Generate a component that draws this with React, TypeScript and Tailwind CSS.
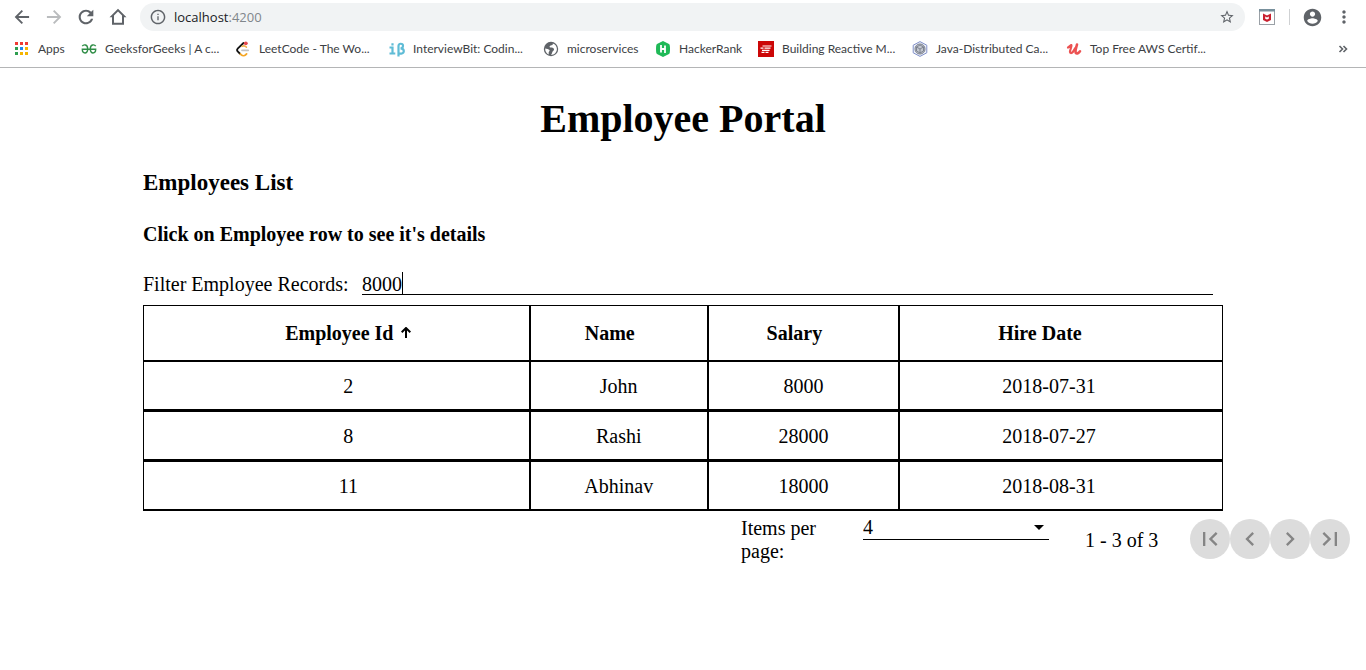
import React, { useState } from "react";

const employees = [
  { id: 2, name: "John", salary: 8000, hired: "2018-07-31" },
  { id: 8, name: "Rashi", salary: 28000, hired: "2018-07-27" },
  { id: 11, name: "Abhinav", salary: 18000, hired: "2018-08-31" },
];

function Icon({ d, className }: { d: string; className?: string }) {
  return (
    <svg viewBox="0 0 24 24" fill="currentColor" aria-hidden="true" className={className}>
      <path d={d} />
    </svg>
  );
}

const paths = {
  back: "M20.500 10.800H7.600L13.200 5.200L11.600 3.600L3.200 12L11.600 20.400L13.200 18.800L7.600 13.200H20.500Z",
  forward: "M3.500 10.800H16.400L10.800 5.200L12.400 3.600L20.800 12L12.400 20.400L10.800 18.800L16.400 13.200H3.500Z",
  reload:
    "M18.200 5.800C16.600 4.200 14.400 3.200 12 3.200C7.100 3.200 3.200 7.100 3.200 12C3.200 16.900 7.100 20.800 12 20.800C16.100 20.800 19.500 18 20.500 14.200H17.900C17 16.600 14.700 18.300 12 18.300C8.500 18.300 5.700 15.500 5.700 12C5.700 8.500 8.500 5.700 12 5.700C13.700 5.700 15.300 6.400 16.400 7.600L13 11H20.800V3.200Z",
  home: "M12 2.200L1.800 12.400H4.800V21.200H19.200V12.400H22.200L12 2.200zM12 5.500L16.800 10.200V18.900H7.200V10.200L12 5.500z",
  info: "M11 7h2v2h-2zm0 4h2v6h-2zm1-10C5.900 1 1 5.900 1 12s4.900 11 11 11 11-4.900 11-11S18.100 1 12 1zm0 19.800c-4.850 0-8.800-3.950-8.800-8.800s3.950-8.800 8.800-8.800 8.800 3.950 8.800 8.800-3.950 8.800-8.800 8.800z",
  star: "M22 9.240l-7.190-.620L12 2 9.190 8.630 2 9.240l5.460 4.730L5.820 21 12 17.270 18.180 21l-1.630-7.030L22 9.240zM12 15.400l-3.760 2.270 1-4.280-3.320-2.880 4.380-.380L12 6.100l1.710 4.040 4.380.380-3.320 2.880 1 4.280L12 15.400z",
  person:
    "M12 2C6.480 2 2 6.480 2 12s4.480 10 10 10 10-4.480 10-10S17.520 2 12 2zm0 3c1.660 0 3 1.340 3 3s-1.340 3-3 3-3-1.340-3-3 1.340-3 3-3zm0 14.200c-2.500 0-4.710-1.280-6-3.220.030-1.990 4-3.080 6-3.080 1.990 0 5.970 1.090 6 3.080-1.290 1.940-3.500 3.220-6 3.220z",
  more: "M12 8c1.100 0 2-.900 2-2s-.900-2-2-2-2 .900-2 2 .900 2 2 2zm0 2c-1.100 0-2 .900-2 2s.900 2 2 2 2-.900 2-2-.900-2-2-2zm0 6c-1.100 0-2 .900-2 2s.900 2 2 2 2-.900 2-2-.900-2-2-2z",
  first: "M18.410 16.590L13.820 12l4.590-4.590L17 6l-6 6 6 6zM6 6h2v12H6z",
  prev: "M15.410 7.410L14 6l-6 6 6 6 1.410-1.410L10.830 12z",
  next: "M10 6L8.590 7.410 13.170 12l-4.580 4.590L10 18l6-6z",
  last: "M5.590 7.410L10.180 12l-4.590 4.590L7 18l6-6-6-6zM16 6h2v12h-2z",
};

function AppsIcon() {
  const colors = [
    "#f03a33", "#f03a33", "#f03a33",
    "#2e9e50", "#1e88f0", "#f5b400",
    "#2e9e50", "#f5b400", "#f5b400",
  ];
  return (
    <svg viewBox="0 0 16 16" className="size-4 shrink-0" aria-hidden="true">
      {colors.map((c, i) => (
        <rect key={i} x={1 + (i % 3) * 5} y={1 + Math.floor(i / 3) * 5} width="3" height="3" fill={c} />
      ))}
    </svg>
  );
}

function GeeksIcon() {
  return (
    <svg viewBox="0 0 16 16" className="size-4 shrink-0" fill="none" stroke="#2f8d46" strokeWidth="1.400" aria-hidden="true">
      <path d="M1.300 5.200C2.500 3.300 6.700 3 6.700 8C6.700 13.400 1.300 13 1.300 8.300H14.700C14.700 13 9.300 13.400 9.300 8C9.300 3 13.500 3.300 14.700 5.200" />
    </svg>
  );
}

function LeetIcon() {
  return (
    <svg viewBox="0 0 16 16" className="size-4 shrink-0" fill="none" strokeLinecap="round" aria-hidden="true">
      <path d="M8.500 2L2.900 7.300C1.900 8.300 1.900 9.600 2.900 10.600L4.800 12.500" stroke="#111" strokeWidth="1.800" />
      <path d="M5.400 13L6.300 13.800C7.500 15 9.500 15 10.600 13.900L11.600 12.900" stroke="#f5a623" strokeWidth="1.800" />
      <path d="M7 5.400C8.200 4.700 9.600 4.700 10.600 5.500L11.400 6.200" stroke="#f0b04a" strokeWidth="1.600" />
      <path d="M7 9.300H13.200" stroke="#c2c2c2" strokeWidth="1.800" />
      <circle cx="10.800" cy="2.300" r="1.900" fill="#e5484d" />
    </svg>
  );
}

function InterviewIcon() {
  return (
    <svg viewBox="0 0 16 16" className="size-4 shrink-0" fill="none" stroke="#5fbcd6" strokeWidth="2.200" aria-hidden="true">
      <path d="M0.500 6.500H3.500V12.500M0.500 12.500H6.300M3.500 2.200V4.400" />
      <path d="M9.500 15.500V5C9.500 2 14 2.100 14 4.700C14 6.500 13 7.300 11.500 7.300C13.500 7.300 14.800 8.300 14.800 10C14.800 12.800 11.300 13.300 9.500 11.800" />
    </svg>
  );
}

function GlobeIcon() {
  return (
    <svg viewBox="0 0 16 16" className="size-4 shrink-0" aria-hidden="true">
      <circle cx="8" cy="8" r="7.200" fill="#5f6368" />
      <path d="M9.800 2.500C10.200 3.800 9 4.400 7.600 4.500C6.300 4.700 6.300 6.400 7.400 6.600C9 6.700 10.700 6.800 11 8.300C11.200 9.300 10.200 9.800 9.600 10.500C9 11.300 9.200 12.500 8 14C11.300 14 13.900 11.400 13.900 8.100C13.900 5.500 12.200 3.300 9.800 2.500Z" fill="#fff" />
      <path d="M2.200 7.400C3.600 7.900 5.900 8 6.500 9C7 10 5.900 10.400 5.700 11.300C5.600 12 5.900 12.900 5.600 13.400C3.400 12.400 2 10 2.200 7.400Z" fill="#fff" />
    </svg>
  );
}

function HackerIcon() {
  return (
    <svg viewBox="0 0 16 16" className="size-4 shrink-0" aria-hidden="true">
      <path d="M8 0L14 3Q15 3.600 15 8Q15 12.400 14 13L8 16L2 13Q1 12.400 1 8Q1 3.600 2 3Z" fill="#1fb957" />
      <path d="M6 4V11.500M10 4.500V12M6 8H10" stroke="#fff" strokeWidth="1.800" />
    </svg>
  );
}

function ReactiveIcon() {
  return (
    <svg viewBox="0 0 16 16" className="size-4 shrink-0" aria-hidden="true">
      <rect width="16" height="16" fill="#cc0707" />
      <path d="M4.500 5H13.500M2.500 7.200H5.500M6.500 7.200H12.500M4 9.300H11.500M3.500 11.300H6.500M7.500 11.300H10.500" stroke="#fff" strokeWidth="1.200" />
    </svg>
  );
}

function JavaIcon() {
  return (
    <svg viewBox="0 0 16 16" className="size-4 shrink-0" fill="none" aria-hidden="true">
      <path d="M8 0.600L14.800 4.200V11.800L8 15.400L1.200 11.800V4.200Z" stroke="#8291c8" fill="#eceff8" />
      <circle cx="8" cy="8" r="5" stroke="#7a808c" fill="#c3c7cf" />
      <path d="M4.500 6L8 4L11.500 6V10L8 12L4.500 10ZM4.500 6L8 8L11.500 6M8 8V12" stroke="#777d8b" strokeWidth="0.900" />
    </svg>
  );
}

function UdemyIcon() {
  return (
    <svg viewBox="0 0 16 16" className="size-4 shrink-0" fill="none" stroke="#ec5252" strokeLinecap="round" strokeLinejoin="round" aria-hidden="true">
      <path d="M2 6.500C3.200 5.900 4.300 4.500 5.300 4C6.300 4.500 3.800 9 4 11C4.500 13.600 7.500 11 9 7.500" strokeWidth="2.200" />
      <path d="M11 3.500C10.300 6.500 8.800 10 9.800 12C10.800 13.200 12.700 12 14 10.300" strokeWidth="2.600" />
    </svg>
  );
}

const bookmarks = [
  { label: "Apps", icon: <AppsIcon />, width: "w-[67px]" },
  { label: "GeeksforGeeks | A c...", icon: <GeeksIcon />, width: "w-[154px]" },
  { label: "LeetCode - The Wo...", icon: <LeetIcon />, width: "w-[154px]" },
  { label: "InterviewBit: Codin...", icon: <InterviewIcon />, width: "w-[154px]" },
  { label: "microservices", icon: <GlobeIcon />, width: "w-[112px]" },
  { label: "HackerRank", icon: <HackerIcon />, width: "w-[103px]" },
  { label: "Building Reactive M...", icon: <ReactiveIcon />, width: "w-[154px]" },
  { label: "Java-Distributed Ca...", icon: <JavaIcon />, width: "w-[154px]" },
  { label: "Top Free AWS Certif...", icon: <UdemyIcon />, width: "w-[154px]" },
];

function BrowserBar() {
  return (
    <header className="border-b border-[#b4b5b6] bg-white font-['Open_Sans',sans-serif] text-[#5f6368]">
      <div className="flex h-[34px] items-center pr-3 pl-3">
        <div className="flex items-center gap-3">
          <button aria-label="Back" className="size-5"><Icon d={paths.back} className="size-5" /></button>
          <button aria-label="Forward" className="size-5 text-[#babcbe]"><Icon d={paths.forward} className="size-5" /></button>
          <button aria-label="Reload" className="size-5"><Icon d={paths.reload} className="size-5" /></button>
          <button aria-label="Home" className="size-5"><Icon d={paths.home} className="size-5" /></button>
        </div>
        <div className="ml-3 flex h-7 flex-1 items-center rounded-full bg-[#f1f3f4] px-[10px]">
          <Icon d={paths.info} className="mr-2 size-4" />
          <p className="flex-1 pt-px text-[13px] text-[#202124]">
            localhost<span className="text-[#80868b]">:4200</span>
          </p>
          <button aria-label="Bookmark this page"><Icon d={paths.star} className="size-4" /></button>
        </div>
        <button aria-label="Extension" className="ml-[14px]">
          <svg viewBox="0 0 16 16" className="size-4" aria-hidden="true">
            <rect x="0.500" y="0.500" width="15" height="15" fill="#fff" stroke="#9aa0a6" />
            <rect width="16" height="2.500" fill="#78909c" />
            <path d="M4 4.500L8 6.500L12 4.500V11L8 13L4 11Z" fill="#c8202f" />
            <path d="M6.200 7.500L8 8.400L9.800 7.500V9.800L8 10.600L6.200 9.800Z" fill="#fff" />
          </svg>
        </button>
        <span className="ml-[14px] h-4 w-px bg-[#cfd1d3]" />
        <button aria-label="Profile" className="ml-3"><Icon d={paths.person} className="size-[21px]" /></button>
        <button aria-label="Menu" className="ml-[11px]"><Icon d={paths.more} className="size-5" /></button>
      </div>
      <nav className="flex h-[33px] items-center pb-1 pl-[14px] font-[Lato,sans-serif] text-[12px] text-[#3c4043]">
        {bookmarks.map((b) => (
          <a key={b.label} href="#" className={`flex shrink-0 items-center gap-2 whitespace-nowrap ${b.width}`}>
            {b.icon}
            {b.label}
          </a>
        ))}
        <button aria-label="More bookmarks" className="mr-[18px] ml-auto">
          <svg viewBox="0 0 10 10" className="size-[10px]" fill="none" stroke="#5f6368" strokeWidth="1.600" aria-hidden="true">
            <path d="M1.500 2L4.500 5L1.500 8M5.500 2L8.500 5L5.500 8" />
          </svg>
        </button>
      </nav>
    </header>
  );
}

function HeadCell({ label, sorted, className = "" }: { label: string; sorted?: boolean; className?: string }) {
  return (
    <th scope="col" aria-sort={sorted ? "ascending" : undefined} className={`h-14 border border-black p-0 font-bold ${className}`}>
      <span className="flex items-center justify-center gap-[6px]">
        <button>{label}</button>
        <svg viewBox="0 0 12 12" className="size-3 shrink-0" fill="none" stroke="#000" strokeWidth="2" aria-hidden="true">
          {sorted && <path d="M7 11V1.500M2.700 5.200L7 1L11.300 5.200" />}
        </svg>
      </span>
    </th>
  );
}

function PageButton({ label, d }: { label: string; d: string }) {
  return (
    <button aria-label={label} disabled className="flex size-10 items-center justify-center rounded-full bg-[#dcdcdc] text-[#858585]">
      <Icon d={d} className="size-7" />
    </button>
  );
}

export default function App() {
  const [filter, setFilter] = useState("8000");
  const cell = "h-[50px] border border-b-2 border-black pt-[2px] pb-0";
  return (
    <div className="bg-white">
      <BrowserBar />
      <main className="font-['Liberation_Serif',serif] text-[20px] leading-[23px] text-black">
        <div className="px-[143px]">
          <h1 className="pt-7 text-center text-[40px] leading-[46px] font-bold">Employee Portal</h1>
          <h2 className="mt-7 text-[23px] leading-[26px] font-bold">Employees List</h2>
          <h3 className="mt-[27px] font-bold">Click on Employee row to see it's details</h3>
          <div className="mt-[26px] flex pr-[10px]">
            <label htmlFor="filter" className="w-[219px] shrink-0 pt-px">Filter Employee Records:</label>
            <div className="relative flex-1">
              <input
                id="filter"
                value={filter}
                onChange={(e) => setFilter(e.target.value)}
                className="block h-[23px] w-full border-b border-black bg-transparent pt-[2px] outline-none"
              />
              <span className="absolute top-0 left-10 h-[22px] w-px bg-black" />
            </div>
          </div>
          <table className="mt-[9px] w-full table-fixed border-separate border-spacing-0 text-center">
            <colgroup>
              <col className="w-[35.8%]" />
              <col className="w-[16.5%]" />
              <col className="w-[17.7%]" />
              <col className="w-[30%]" />
            </colgroup>
            <thead>
              <tr>
                <HeadCell label="Employee Id" sorted className="pl-6" />
                <HeadCell label="Name" />
                <HeadCell label="Salary" />
                <HeadCell label="Hire Date" className="pr-6" />
              </tr>
            </thead>
            <tbody>
              {employees.map((e) => (
                <tr key={e.id}>
                  <td className={`${cell} pr-0 pl-6`}>{e.id}</td>
                  <td className={`${cell} px-0`}>{e.name}</td>
                  <td className={`${cell} px-0`}>{e.salary}</td>
                  <td className={`${cell} pr-6 pl-0`}>{e.hired}</td>
                </tr>
              ))}
            </tbody>
          </table>
        </div>
        <div className="flex h-14 items-center justify-end pr-4">
          <label htmlFor="page-size" className="w-[122px] pt-[2px]">
            Items per
            <br />
            page:
          </label>
          <div className="relative mb-[27px] h-6 w-[186px] self-end border-b border-black">
            <select id="page-size" defaultValue="4" className="block h-[23px] w-full appearance-none bg-transparent outline-none">
              <option value="4">4</option>
              <option value="8">8</option>
            </select>
            <svg viewBox="0 0 10 5" className="pointer-events-none absolute top-[9px] right-[5px] h-[5px] w-[10px]" aria-hidden="true">
              <path d="M0 0H10L5 5Z" />
            </svg>
          </div>
          <p className="mr-8 ml-9 w-[73px] pt-[2px] whitespace-nowrap">1 - 3 of 3</p>
          <PageButton label="First page" d={paths.first} />
          <PageButton label="Previous page" d={paths.prev} />
          <PageButton label="Next page" d={paths.next} />
          <PageButton label="Last page" d={paths.last} />
        </div>
      </main>
    </div>
  );
}
